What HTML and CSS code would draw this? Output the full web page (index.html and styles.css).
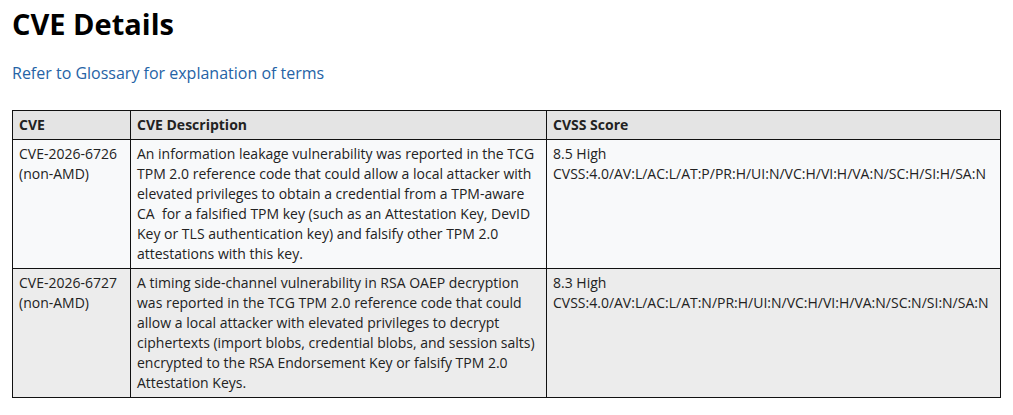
FILE: index.html
```html
<!DOCTYPE html>
<html>
<head>
<meta charset="utf-8">
<link rel="stylesheet" href="styles.css">
</head>
<body>
<h1 class="title">CVE Details</h1>
<p class="intro"><a class="link" href="#">Refer to Glossary for explanation of terms</a></p>
<table class="cve-table">
  <thead>
    <tr>
      <th class="col-cve">CVE</th>
      <th class="col-desc">CVE Description</th>
      <th class="col-score">CVSS Score</th>
    </tr>
  </thead>
  <tbody>
    <tr class="row-odd">
      <td>CVE-2026-6726<br>(non-AMD)</td>
      <td>An information leakage vulnerability was reported in the TCG TPM 2.0 reference code that could allow a local attacker with elevated privileges to obtain a credential from a TPM-aware CA&nbsp; for a falsified TPM key (such as an Attestation Key, DevID Key or TLS authentication key) and falsify other TPM 2.0 attestations with this key.</td>
      <td>8.5 High<br>CVSS:4.0/AV:L/AC:L/AT:P/PR:H/UI:N/VC:H/VI:H/VA:N/SC:H/SI:H/SA:N</td>
    </tr>
    <tr class="row-even">
      <td>CVE-2026-6727<br>(non-AMD)</td>
      <td>A timing side-channel vulnerability in RSA OAEP decryption was reported in the TCG TPM 2.0 reference code that could allow a local attacker with elevated privileges to decrypt ciphertexts (import blobs, credential blobs, and session salts) encrypted to the RSA Endorsement Key or falsify TPM 2.0 Attestation Keys.</td>
      <td>8.3 High<br>CVSS:4.0/AV:L/AC:L/AT:N/PR:H/UI:N/VC:H/VI:H/VA:N/SC:N/SI:N/SA:N</td>
    </tr>
  </tbody>
</table>
</body>
</html>
```
FILE: styles.css
```css
body {
  margin: 0;
  padding: 0 12px;
  font-family: "Open Sans", "Liberation Sans", sans-serif;
  color: #222;
  background: #fff;
}
.title {
  margin: 0;
  padding-top: 4px;
  font-size: 29px;
  line-height: 40px;
  font-weight: 700;
  color: #000;
}
.intro {
  margin: 17px 0 0 0;
  font-size: 16px;
  line-height: 24px;
}
.link {
  color: #2563a6;
  text-decoration: none;
}
.cve-table {
  margin-top: 25px;
  width: 989px;
  border-collapse: collapse;
  border: 1px solid #111;
  font-size: 14px;
  line-height: 20px;
}
.cve-table th,
.cve-table td {
  border: 1px solid #111;
  text-align: left;
  vertical-align: top;
  padding: 4px 5px 4px 6px;
}
.cve-table th {
  background: #e4e4e4;
  font-weight: 700;
}
.col-cve { width: 106px; }
.col-desc { width: 404px; }
.row-odd td { background: #f8f9fa; }
.row-even td { background: #ececec; }
```
